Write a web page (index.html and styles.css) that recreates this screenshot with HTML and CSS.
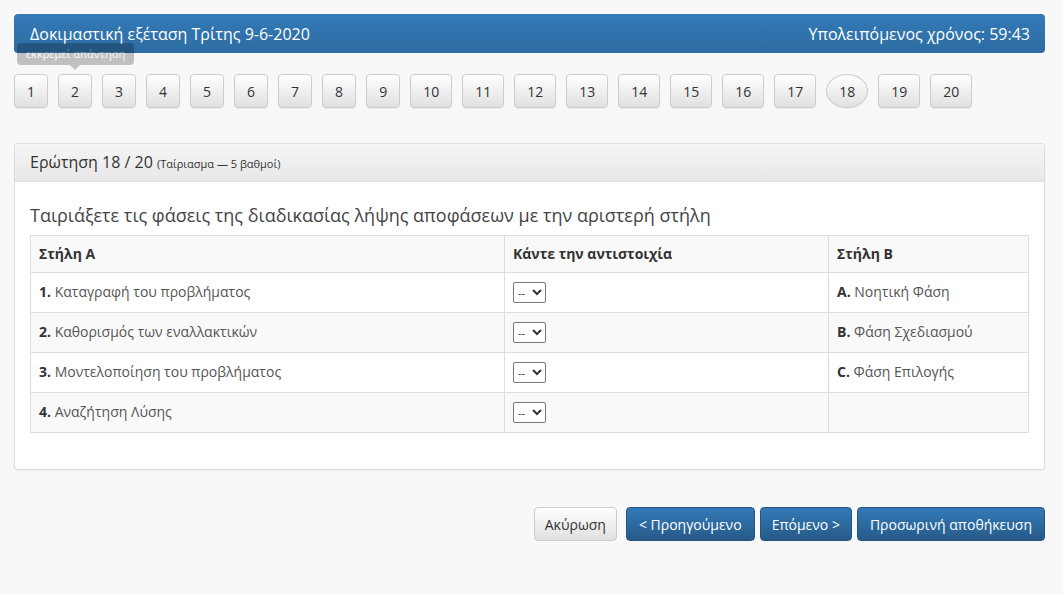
FILE: index.html
```html
<!DOCTYPE html>
<html lang="el">

<head>
    <meta charset="UTF-8">
    <meta name="viewport" content="width=device-width, initial-scale=1.0">
    <title>Δοκιμαστική εξέταση</title>
    <link rel="stylesheet" href="styles.css">
</head>

<body>
    <div class="wrap">
        <div class="exam_bar">
            <span>Δοκιμαστική εξέταση Τρίτης 9-6-2020</span>
            <span>Υπολειπόμενος χρόνος: 59:43</span>
        </div>

        <div class="qnav">
            <button class="qbtn">1</button>
            <button class="qbtn has_tip">2
                <span class="tip">εκκρεμεί απάντηση</span>
            </button>
            <button class="qbtn">3</button>
            <button class="qbtn">4</button>
            <button class="qbtn">5</button>
            <button class="qbtn">6</button>
            <button class="qbtn">7</button>
            <button class="qbtn">8</button>
            <button class="qbtn">9</button>
            <button class="qbtn">10</button>
            <button class="qbtn">11</button>
            <button class="qbtn">12</button>
            <button class="qbtn">13</button>
            <button class="qbtn">14</button>
            <button class="qbtn">15</button>
            <button class="qbtn">16</button>
            <button class="qbtn">17</button>
            <button class="qbtn current">18</button>
            <button class="qbtn">19</button>
            <button class="qbtn">20</button>
        </div>

        <div class="panel">
            <div class="panel_head">
                Ερώτηση 18 / 20 <small>(Ταίριασμα — 5 βαθμοί)</small>
            </div>
            <div class="panel_body">
                <p class="qtext">Ταιριάξετε τις φάσεις της διαδικασίας λήψης αποφάσεων με την αριστερή στήλη</p>
                <table class="match">
                    <tbody>
                        <tr>
                            <th class="col_a">Στήλη Α</th>
                            <th class="col_m">Κάντε την αντιστοιχία</th>
                            <th>Στήλη Β</th>
                        </tr>
                        <tr>
                            <td><b>1.</b> Καταγραφή του προβλήματος</td>
                            <td><select><option>--</option></select></td>
                            <td><b>A.</b> Νοητική Φάση</td>
                        </tr>
                        <tr>
                            <td><b>2.</b> Καθορισμός των εναλλακτικών</td>
                            <td><select><option>--</option></select></td>
                            <td><b>B.</b> Φάση Σχεδιασμού</td>
                        </tr>
                        <tr>
                            <td><b>3.</b> Μοντελοποίηση του προβλήματος</td>
                            <td><select><option>--</option></select></td>
                            <td><b>C.</b> Φάση Επιλογής</td>
                        </tr>
                        <tr>
                            <td><b>4.</b> Αναζήτηση Λύσης</td>
                            <td><select><option>--</option></select></td>
                            <td></td>
                        </tr>
                    </tbody>
                </table>
            </div>
        </div>

        <div class="actions">
            <button class="btn cancel">Ακύρωση</button>
            <button class="btn primary">&lt; Προηγούμενο</button>
            <button class="btn primary next">Επόμενο &gt;</button>
            <button class="btn primary">Προσωρινή αποθήκευση</button>
        </div>
    </div>
</body>

</html>
```

FILE: styles.css
```css
* {
    margin: 0;
    padding: 0;
    box-sizing: border-box;
}

body {
    background-color: #f8f8f8;
    font-family: "Open Sans", "Noto Sans", sans-serif;
    font-size: 14px;
    color: #333;
}

.wrap {
    width: 1031px;
    margin-left: 14px;
    padding-top: 14px;
}

.exam_bar {
    height: 39px;
    display: flex;
    justify-content: space-between;
    align-items: center;
    padding: 0 15px 0 16px;
    border-radius: 4px;
    background: linear-gradient(#337ab7, #2d6ca2);
    color: #fff;
    font-size: 16px;
}

.qnav {
    display: flex;
    gap: 10px;
    margin-top: 21px;
}

.qbtn {
    position: relative;
    height: 34px;
    padding: 0 12px;
    border: 1px solid #ccc;
    border-radius: 4px;
    background: linear-gradient(#fff, #e0e0e0);
    box-shadow: 0 1px 0 rgba(255, 255, 255, .15) inset, 0 1px 1px rgba(0, 0, 0, .05);
    font-family: inherit;
    font-size: 14px;
    color: #333;
}

.qbtn.current {
    border-radius: 50%;
}

.tip {
    position: absolute;
    left: -42px;
    bottom: 42px;
    width: 117px;
    height: 22px;
    line-height: 22px;
    border-radius: 4px;
    background-color: #000;
    color: #fff;
    font-size: 11px;
    opacity: .22;
    white-space: nowrap;
}

.tip::after {
    content: "";
    position: absolute;
    left: 53px;
    top: 22px;
    border: 5px solid transparent;
    border-top-color: #000;
    border-bottom: 0;
}

.panel {
    margin-top: 35px;
    border: 1px solid #ddd;
    border-radius: 4px;
    background-color: #fff;
    box-shadow: 0 1px 2px rgba(0, 0, 0, .05);
}

.panel_head {
    height: 38px;
    padding: 0 15px;
    line-height: 37px;
    border-bottom: 1px solid #ddd;
    border-radius: 3px 3px 0 0;
    background: linear-gradient(#f5f5f5, #e8e8e8);
    font-size: 16px;
}

.panel_head small {
    font-size: 11px;
}

.panel_body {
    padding: 15px;
}

.qtext {
    margin: 8px 0 10px;
    font-size: 18px;
    line-height: 20px;
    color: #444;
}

.match {
    width: 100%;
    border-collapse: collapse;
    margin-bottom: 21px;
}

.match th,
.match td {
    border: 1px solid #ddd;
    padding: 8px;
    text-align: left;
    vertical-align: top;
    line-height: 20px;
}

.match td {
    height: 40px;
    padding: 8px 8px 9px;
    line-height: 21px;
    color: #555;
}

.match td b {
    color: #333;
}

.match tr:nth-child(odd) {
    background-color: #f9f9f9;
}

.match th {
    color: #333;
}

.col_a {
    width: 474px;
}

.col_m {
    width: 324px;
}

.match select {
    display: block;
    margin-top: 1px;
    height: 21px;
    width: 33px;
    font-family: inherit;
    font-size: 11px;
    color: #333;
    border: 1px solid #767676;
    border-radius: 2px;
    background-color: #fff;
}

.actions {
    display: flex;
    justify-content: flex-end;
    gap: 5px;
    margin-top: 37px;
}

.btn {
    height: 34px;
    padding: 0 12px;
    border: 1px solid #245580;
    border-radius: 4px;
    font-family: inherit;
    font-size: 14px;
}

.btn.cancel {
    margin-right: 4px;
    padding: 0 10px;
    border-color: #ccc;
    background: linear-gradient(#fff, #e0e0e0);
    color: #333;
}

.btn.primary {
    background: linear-gradient(#337ab7, #265a88);
    color: #fff;
}

.btn.next {
    padding: 0 11px;
}
```
